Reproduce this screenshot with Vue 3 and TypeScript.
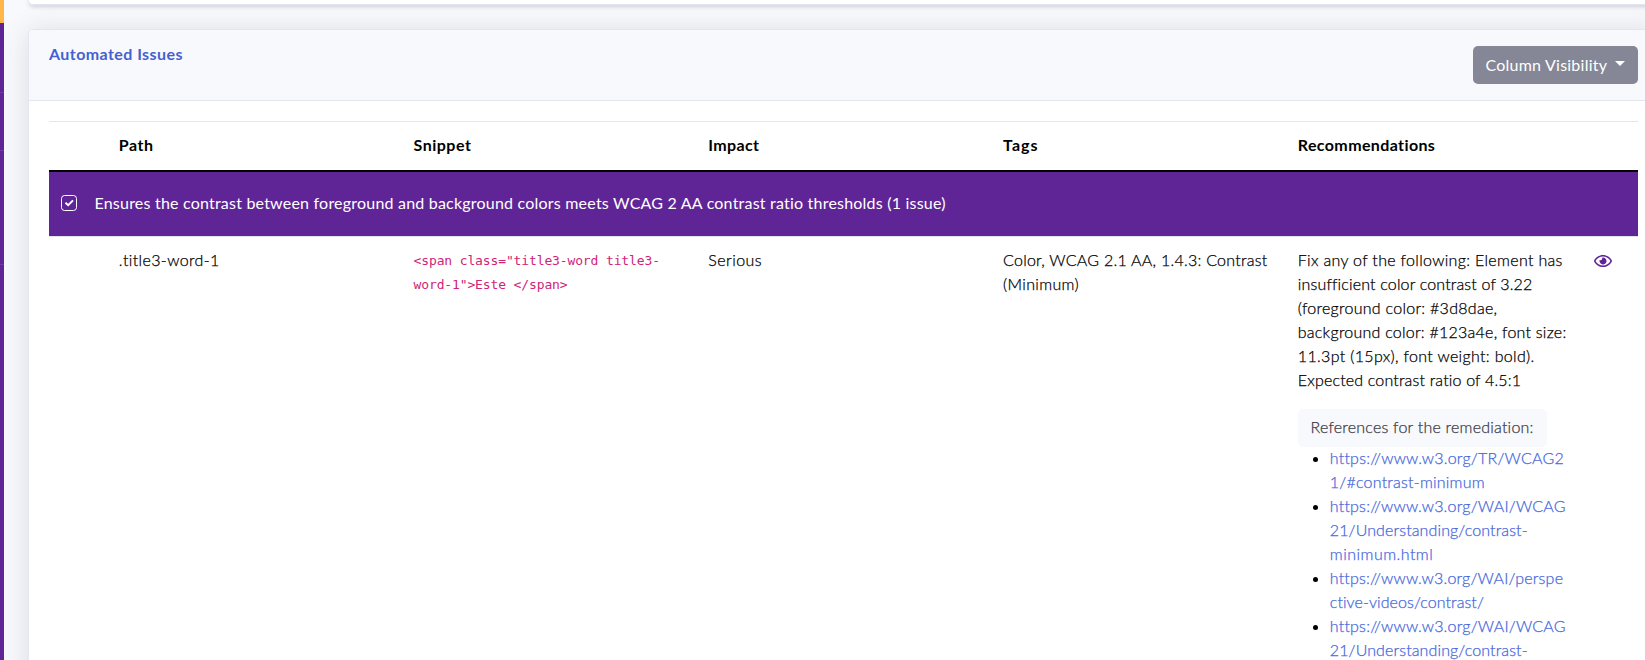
<script setup lang="ts">
interface Line { text: string; tracking: number }

const line = (text: string, tracking: number): Line => ({ text, tracking })
const spacing = (l: Line) => ({ letterSpacing: `${l.tracking}px` })

const heading = line('Automated Issues', 0.43)
const buttonLabel = line('Column Visibility', 0.23)
const group = line(
  'Ensures the contrast between foreground and background colors meets WCAG 2 AA contrast ratio thresholds (1 issue)',
  0.21,
)

const columns: Line[] = [
  line('Path', 0.5),
  line('Snippet', 0.5),
  line('Impact', 0.35),
  line('Tags', 1),
  line('Recommendations', 0.38),
]

const path = line('.title3-word-1', 0.38)
const snippet = ['<span class="title3-word title3-', 'word-1">Este </span>']
const impact = line('Serious', 0.45)
const tags = [line('Color, WCAG 2.1 AA, 1.4.3: Contrast', 0.25), line('(Minimum)', 0.35)]
const fixes = [
  line('Fix any of the following: Element has', 0.32),
  line('insufficient color contrast of 3.22', 0.16),
  line('(foreground color: #3d8dae,', 0.27),
  line('background color: #123a4e, font size:', 0.24),
  line('11.3pt (15px), font weight: bold).', 0.33),
  line('Expected contrast ratio of 4.5:1', 0.17),
]
const referencesLabel = line('References for the remediation:', 0.22)
const references: Line[][] = [
  [line('https://www.w3.org/TR/WCAG2', 0.22), line('1/#contrast-minimum', 0.22)],
  [
    line('https://www.w3.org/WAI/WCAG', 0.21),
    line('21/Understanding/contrast-', 0.12),
    line('minimum.html', 0.48),
  ],
  [line('https://www.w3.org/WAI/perspe', 0.2), line('ctive-videos/contrast/', 0.08)],
  [line('https://www.w3.org/WAI/WCAG', 0.21), line('21/Understanding/contrast-', 0.12)],
]
</script>

<template>
  <div class="page">
    <aside class="sidebar">
      <div class="active"></div>
      <div class="item first"></div>
      <div class="item second"></div>
      <div class="item third"></div>
    </aside>
    <main class="content">
      <section class="card previous"></section>
      <section class="card issues">
        <header class="card-header">
          <h6 :style="spacing(heading)">{{ heading.text }}</h6>
          <button type="button" class="toggle">
            <span :style="spacing(buttonLabel)">{{ buttonLabel.text }}</span>
            <i class="caret"></i>
          </button>
        </header>
        <div class="table">
          <div class="row head">
            <div></div>
            <div v-for="c in columns" :key="c.text" class="cell" :style="spacing(c)">{{ c.text }}</div>
          </div>
          <div class="group">
            <svg class="check" viewBox="0 0 16 16" width="16" height="16">
              <rect x=".5" y=".5" width="15" height="15" rx="3" fill="none" stroke="#fff" />
              <path d="M4.5 7.8 7.2 10.2 12 5.4" fill="none" stroke="#fff" stroke-width="2" />
            </svg>
            <span :style="spacing(group)">{{ group.text }}</span>
          </div>
          <div class="row body">
            <div></div>
            <div class="cell"><span :style="spacing(path)">{{ path.text }}</span></div>
            <div class="cell snippet"><code v-for="s in snippet" :key="s">{{ s }}</code></div>
            <div class="cell"><span :style="spacing(impact)">{{ impact.text }}</span></div>
            <div class="cell">
              <span v-for="t in tags" :key="t.text" class="line" :style="spacing(t)">{{ t.text }}</span>
            </div>
            <div class="cell">
              <p class="fixes">
                <span v-for="f in fixes" :key="f.text" class="line" :style="spacing(f)">{{ f.text }}</span>
              </p>
              <div class="badge" :style="spacing(referencesLabel)">{{ referencesLabel.text }}</div>
              <ul>
                <li v-for="(r, i) in references" :key="i">
                  <a><span v-for="l in r" :key="l.text" class="line" :style="spacing(l)">{{ l.text }}</span></a>
                </li>
              </ul>
            </div>
            <div class="cell">
              <svg class="eye" viewBox="0 0 576 512" width="18" height="16">
                <path
                  fill="#5f2596"
                  d="M288 144a110.94 110.94 0 0 0-31.24 5 55.4 55.4 0 0 1 7.24 27 56 56 0 0 1-56 56 55.4 55.4 0 0 1-27-7.24A111.71 111.71 0 1 0 288 144zm284.52 97.4C518.29 135.59 410.93 64 288 64S57.68 135.64 3.48 241.41a32.35 32.35 0 0 0 0 29.19C57.71 376.41 165.07 448 288 448s230.32-71.64 284.52-177.4a32.35 32.35 0 0 0 0-29.19zM288 400c-98.65 0-189.09-55-237.93-144C98.91 167 189.34 112 288 112s189.09 55 237.93 144C477.1 345 386.66 400 288 400z"
                />
              </svg>
            </div>
          </div>
        </div>
      </section>
    </main>
  </div>
</template>

<style scoped>
* {
  box-sizing: border-box;
}
.page {
  display: flex;
  width: 1645px;
  height: 660px;
  overflow: hidden;
  background: #f8f9fc;
  color: #000;
  font: 400 16px/24px Lato, 'Open Sans', sans-serif;
  font-variant-ligatures: none;
  white-space: nowrap;
}
.sidebar {
  display: flex;
  flex-direction: column;
  flex: none;
  width: 4px;
  background: #5f2596;
}
.active {
  height: 23px;
  background: #ffb848;
}
.item {
  border-bottom: 1px solid #6f3b9f;
}
.first {
  height: 70px;
}
.second {
  height: 58px;
}
.third {
  height: 114px;
}
.content {
  flex: 1;
  min-width: 0;
  padding-left: 24px;
  overflow: hidden;
}
.card {
  width: 1632px;
  border: 1px solid #e3e6f0;
  background: #fff;
}
.previous {
  height: 5px;
  border-top: 0;
  border-radius: 0 0 5px 5px;
  box-shadow: 0 2px 4px rgba(58, 59, 69, 0.2);
}
.issues {
  height: 700px;
  margin-top: 24px;
  border-radius: 5px;
  box-shadow: 0 2px 28px rgba(58, 59, 69, 0.15);
}
.card-header {
  display: flex;
  align-items: flex-start;
  justify-content: space-between;
  height: 71px;
  padding: 16px 21px 0 20px;
  border-bottom: 1px solid #e3e6f0;
  border-radius: 4px 4px 0 0;
  background: #f8f9fc;
}
h6 {
  margin: -1px 0 0;
  color: #4560d0;
  font-size: 16px;
  font-weight: 700;
  line-height: 17px;
}
.toggle {
  display: flex;
  align-items: center;
  gap: 8px;
  width: 165px;
  height: 38px;
  padding: 0 12.5px 1px;
  border: 0;
  border-radius: 5px;
  background: #858796;
  color: #fff;
  font: inherit;
}
.caret {
  margin-top: -2px;
  border: 5px solid transparent;
  border-top-color: #fff;
  border-bottom: 0;
}
.table {
  width: 1589px;
  margin: 20px 0 0 20px;
}
.row {
  display: grid;
  grid-template-columns: 57.8px repeat(5, 294.75px) 57.4px;
}
.head {
  height: 51px;
  border-top: 1px solid #e3e6f0;
  border-bottom: 2px solid #000;
  font-weight: 700;
}
.cell {
  padding: 11px 0 0 12px;
}
.group {
  display: flex;
  align-items: center;
  gap: 17.5px;
  height: 64px;
  padding: 0 0 2px 12px;
  background: #5f2596;
  color: #fff;
}
.body {
  border-top: 1px solid #dfe3ec;
  font-weight: 300;
  -webkit-text-stroke: 0.25px;
}
.line,
code {
  display: block;
}
.snippet {
  padding-top: 12px;
}
code {
  color: #d02478;
  font: 400 13px/24px 'DejaVu Sans Mono', monospace;
  letter-spacing: -0.13px;
  white-space: pre;
  -webkit-text-stroke: 0;
}
.fixes {
  margin: 0 0 17px;
}
.badge {
  width: 249px;
  height: 38px;
  padding: 6px 12.7px;
  border-radius: 5px;
  background: #f8f9fc;
  color: #3a3b45;
}
ul {
  margin: -1px 0 0;
  padding-left: 32px;
}
a {
  color: #4668dc;
}
.eye {
  display: block;
  margin: 5px 0 0 1px;
}
</style>
